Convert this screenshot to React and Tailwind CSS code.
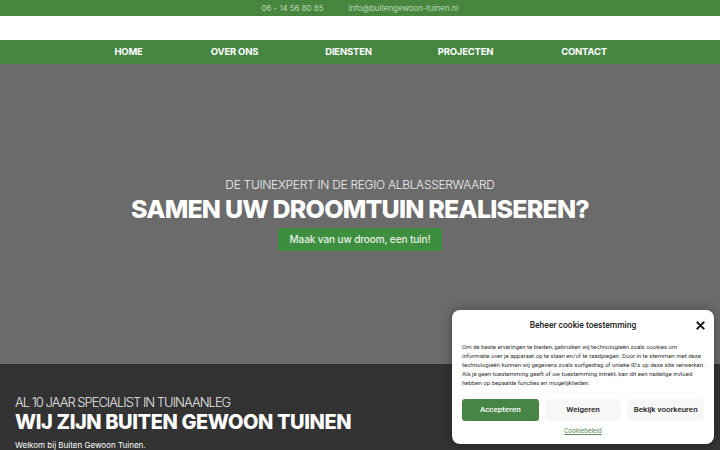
export default function App() {
  return (
    <div className="relative h-[450px] w-[720px] overflow-hidden bg-[#333333]" style={{ fontFamily: "Inter, 'Noto Sans', sans-serif" }}>
      <div className="flex h-[16px] items-center justify-center gap-[25px] bg-[#48863f] text-[8px] font-light text-[#d9e6d6]">
        <span>06 - 14 56 80 85</span>
        <span>info@buitengewoon-tuinen.nl</span>
      </div>
      <div className="h-[24px] bg-white" />
      <nav className="flex h-[24px] items-center bg-[#468542] pl-[90px] text-[9.5px] font-bold tracking-[-0.2px] text-white">
        <span className="w-[77px] text-center">HOME</span>
        <span className="w-[135px] text-center">OVER ONS</span>
        <span className="w-[93px] text-center">DIENSTEN</span>
        <span className="w-[141px] text-center">PROJECTEN</span>
        <span className="w-[96px] text-center">CONTACT</span>
      </nav>
      <section className="flex h-[300px] flex-col items-center bg-[#6b6b6b] pt-[113px] text-white">
        <div className="text-[12px] font-light leading-[16px] tracking-[-0.3px] text-[#eeeeee]">DE TUINEXPERT IN DE REGIO ALBLASSERWAARD</div>
        <h1 className="mt-[1px] text-[25px] font-extrabold leading-[30px] tracking-[-0.8px]">SAMEN UW DROOMTUIN REALISEREN?</h1>
        <div className="mt-[4px] flex h-[23px] w-[164px] items-center justify-center rounded-[2px] bg-[#3e8e3f] text-[10px] font-medium tracking-[-0.1px] text-[#e8f2e6]">
          Maak van uw droom, een tuin!
        </div>
      </section>
      <section className="px-[15px] pt-[30px] text-white">
        <div className="text-[13px] font-light leading-[16px] tracking-[-1px] text-[#e6e6e6]">AL 10 JAAR SPECIALIST IN TUINAANLEG</div>
        <h2 className="text-[20px] font-extrabold leading-[24px] tracking-[-0.4px]">WIJ ZIJN BUITEN GEWOON TUINEN</h2>
        <p className="mt-[5px] text-[8px] leading-[12px] font-normal">Welkom bij Buiten Gewoon Tuinen.</p>
      </section>

      <div className="absolute left-[452px] top-[310px] w-[262px] rounded-[8px] bg-white px-[10px] pt-[9px] pb-[7px] shadow-[0_0_12px_rgba(0,0,0,0.35)]" style={{ fontFamily: "Roboto, 'Liberation Sans', sans-serif" }}>
        <div className="relative flex h-[12px] items-center justify-center text-[8.5px] font-medium text-[#222]">
          Beheer cookie toestemming
          <svg className="absolute right-[-1px] top-[2px]" width="9" height="9" viewBox="0 0 10 10">
            <path d="M1.5 1.5 L8.5 8.5 M8.5 1.5 L1.5 8.5" stroke="#111" strokeWidth="2.2" strokeLinecap="round" />
          </svg>
        </div>
        <p className="mt-[11px] whitespace-nowrap text-[6.1px] leading-[9px] tracking-[-0.03px] text-[#333]">
          Om de beste ervaringen te bieden, gebruiken wij technologieën zoals cookies om<br />
          informatie over je apparaat op te slaan en/of te raadplegen. Door in te stemmen met deze<br />
          technologieën kunnen wij gegevens zoals surfgedrag of unieke ID's op deze site verwerken.<br />
          Als je geen toestemming geeft of uw toestemming intrekt, kan dit een nadelige invloed<br />
          hebben op bepaalde functies en mogelijkheden.
        </p>
        <div className="mt-[12px] flex gap-[6px]">
          <div className="flex h-[22px] flex-1 items-center justify-center rounded-[3px] bg-[#468546] text-[8px] font-medium text-white">Accepteren</div>
          <div className="flex h-[22px] flex-1 items-center justify-center rounded-[3px] bg-[#f7f7f7] text-[8px] font-medium text-[#222]">Weigeren</div>
          <div className="flex h-[22px] flex-1 items-center justify-center rounded-[3px] bg-[#f7f7f7] text-[8px] font-medium text-[#222]">Bekijk voorkeuren</div>
        </div>
        <div className="mt-[6px] text-center text-[6.5px] text-[#5a8a5a] underline">Cookiebeleid</div>
      </div>
    </div>
  );
}
